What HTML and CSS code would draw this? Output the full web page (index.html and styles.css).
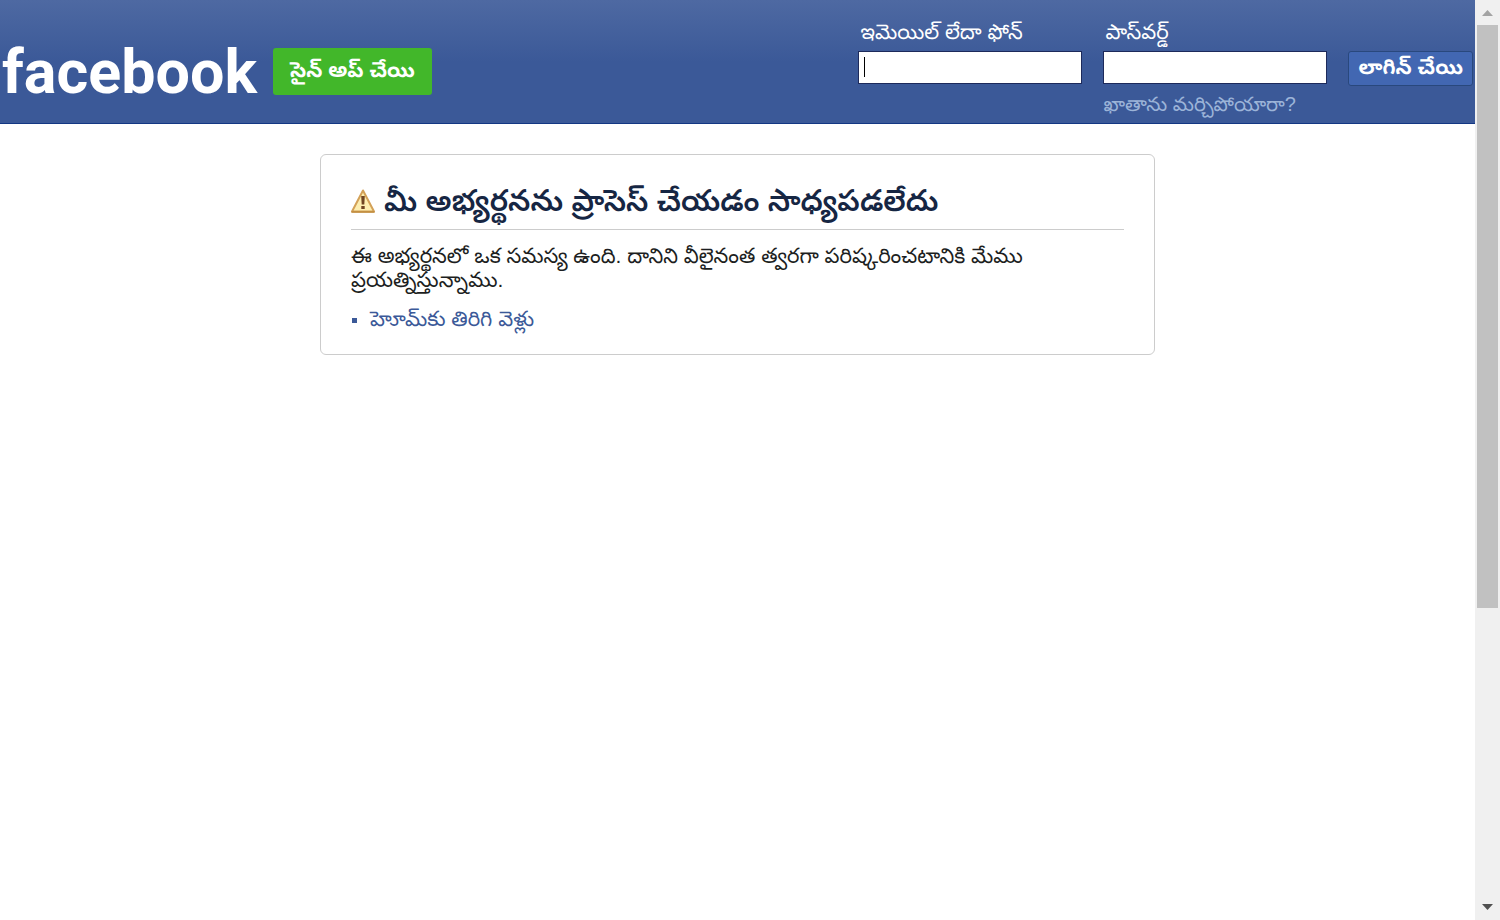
FILE: index.html
```html
<!DOCTYPE html>
<html lang="te">
<head>
<meta charset="utf-8">
<meta name="viewport" content="width=device-width, initial-scale=1">
<title>Facebook</title>
<link rel="stylesheet" href="styles.css">
</head>
<body>
<div class="page">
  <header class="topbar">
    <a class="logo" href="#">facebook</a>
    <a class="signup" href="#">సైన్ అప్ చేయి</a>
    <form class="login">
      <div class="field">
        <label for="email">ఇమెయిల్ లేదా ఫోన్</label>
        <input class="active" id="email" type="text">
      </div>
      <div class="field">
        <label for="pass">పాస్‌వర్డ్</label>
        <input id="pass" type="password">
        <a class="forgot" href="#">ఖాతాను మర్చిపోయారా?</a>
      </div>
      <button class="submit" type="button">లాగిన్ చేయి</button>
    </form>
  </header>
  <main class="card">
    <h2 class="title">
      <svg class="warning" viewBox="0 0 24 24" aria-hidden="true">
        <path d="M12 1.5 L23 22.5 H1 Z" fill="#fdeeb0" stroke="#d3a158" stroke-width="2" stroke-linejoin="round"/>
        <path d="M1 23 H23" stroke="#c08a3c" stroke-width="1.5" stroke-linecap="round"/>
        <path d="M10.2 7 H13.8 L13.3 15.5 H10.7 Z M10.3 17 H13.7 V20 H10.3 Z" fill="#704523"/>
      </svg>
      <span>మీ అభ్యర్థనను ప్రాసెస్ చేయడం సాధ్యపడలేదు</span>
    </h2>
    <p class="message">ఈ అభ్యర్థనలో ఒక సమస్య ఉంది. దానిని వీలైనంత త్వరగా పరిష్కరించటానికి మేము ప్రయత్నిస్తున్నాము.</p>
    <ul class="links">
      <li><a href="#">హెూమ్‌కు తిరిగి వెళ్లు</a></li>
    </ul>
  </main>
</div>
<div class="scrollbar" aria-hidden="true">
  <svg class="arrow" viewBox="0 0 25 25"><path d="M7 16 L12.5 10 L18 16 Z" fill="#a3a3a3"/></svg>
  <div class="track"><div class="thumb"></div></div>
  <svg class="arrow" viewBox="0 0 25 25"><path d="M7 9 L12.5 15 L18 9 Z" fill="#505050"/></svg>
</div>
</body>
</html>
```
FILE: styles.css
```css
* {
  box-sizing: border-box;
}

body {
  display: flex;
  min-height: 100vh;
  margin: 0;
  background: #fff;
  color: #1c1e21;
  font-family: "Liberation Sans", Arial, "Noto Sans Telugu", sans-serif;
  font-size: 21px;
  line-height: 24px;
}

a {
  text-decoration: none;
}

.page {
  flex: 1;
  min-width: 0;
}

.topbar {
  display: flex;
  align-items: flex-start;
  gap: 16px;
  padding: 20px 2px 7px;
  border-bottom: 1px solid #133783;
  background: linear-gradient(#4e69a2, #3b5998 50%);
}

.logo {
  margin-top: 22px;
  color: #fff;
  font: bold 61px/60px Roboto, sans-serif;
}

.signup {
  margin-top: 28px;
  padding: 10px 17px 13px;
  border-radius: 3px;
  background: #42b72a;
  color: #fff;
  font-weight: bold;
}

.login {
  display: flex;
  align-items: flex-start;
  gap: 21px;
  margin-left: auto;
}

.field {
  display: flex;
  flex-direction: column;
  width: 224px;
}

.field label {
  padding-left: 2px;
  color: #fff;
}

.field input {
  width: 100%;
  height: 33px;
  margin: 7px 0 8px;
  padding: 0 5px;
  border: 1px solid #1d2a5b;
  background: #fff;
  font: inherit;
}

.field .active {
  background: linear-gradient(#000, #000) 5px 5px / 1px 20px no-repeat #fff;
}

.forgot {
  color: #9cb4d8;
  font-size: 20px;
}

.submit {
  margin-top: 31px;
  height: 35px;
  padding: 0 9px 4px;
  border: 1px solid #29487d;
  border-radius: 3px;
  background: #4267b2;
  color: #fff;
  font: inherit;
  font-weight: bold;
}

.card {
  max-width: 835px;
  margin: 30px auto;
  padding: 30px 30px 23px;
  border: 1px solid #ccc;
  border-radius: 6px;
}

.title {
  display: flex;
  align-items: center;
  gap: 9px;
  margin: 0;
  padding-bottom: 12px;
  border-bottom: 1px solid #ccc;
  color: #162643;
  font-size: 30px;
  font-weight: 600;
  line-height: 32px;
}

.warning {
  flex: none;
  width: 24px;
  height: 24px;
}

.message {
  margin: 14px 0 15px;
}

.links {
  margin: 0;
  padding: 0;
  list-style: none;
  color: #3b5998;
}

.links li {
  display: flex;
  align-items: center;
  gap: 13px;
}

.links li::before {
  width: 5px;
  height: 5px;
  margin: 3px 0 0 1px;
  background: #3b5998;
  content: "";
}

.links a {
  color: #3b5998;
}

.scrollbar {
  display: flex;
  flex-direction: column;
  width: 25px;
  height: 100vh;
  background: #f0f0f0;
}

.arrow {
  width: 25px;
  height: 25px;
}

.track {
  flex: 1;
  padding: 0 2px;
}

.thumb {
  height: 67%;
  background: #c1c1c1;
}
```
